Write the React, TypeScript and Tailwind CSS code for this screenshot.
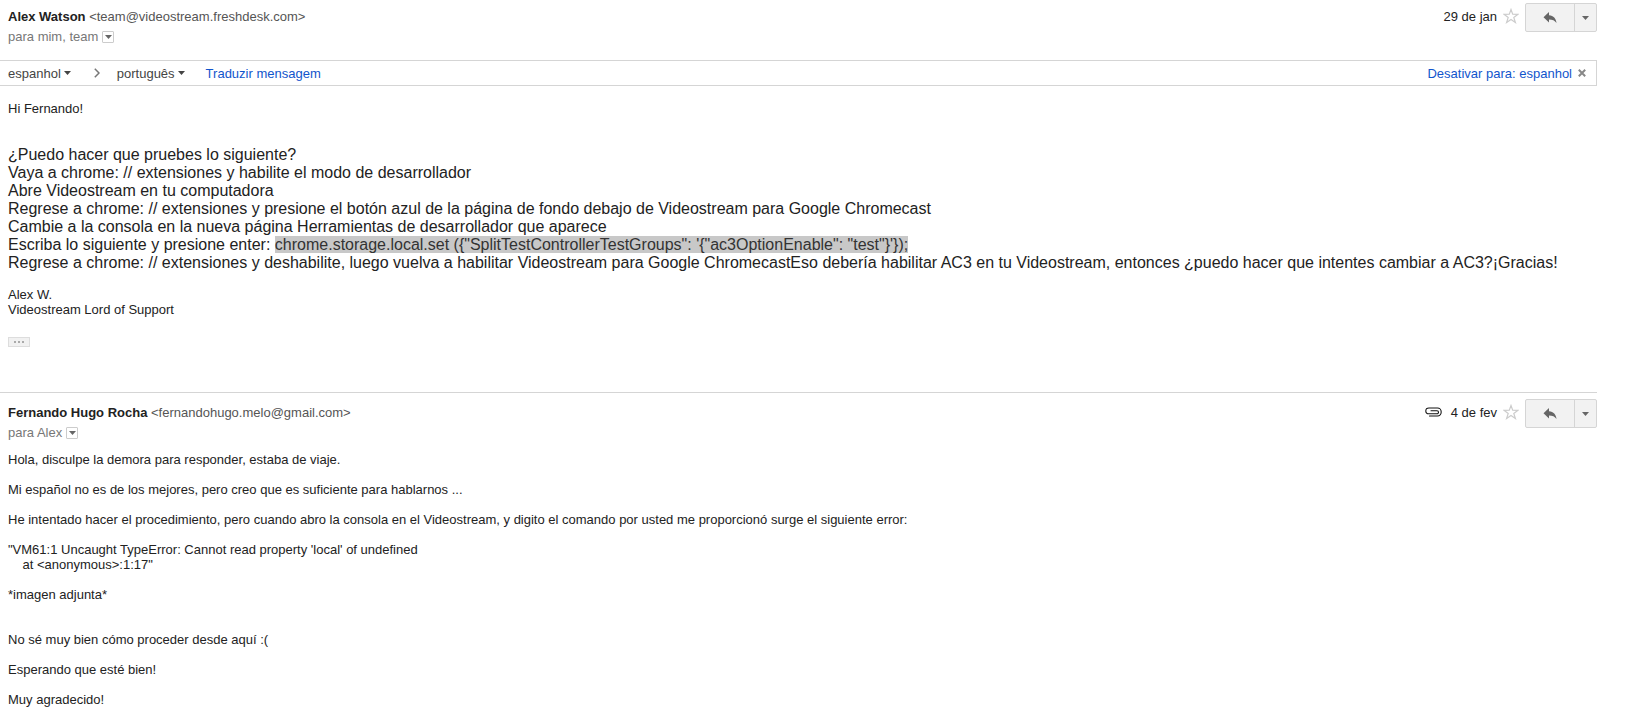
import React from 'react'

const instructions = [
  '¿Puedo hacer que pruebes lo siguiente?',
  'Vaya a chrome: // extensiones y habilite el modo de desarrollador',
  'Abre Videostream en tu computadora',
  'Regrese a chrome: // extensiones y presione el botón azul de la página de fondo debajo de Videostream para Google Chromecast',
  'Cambie a la consola en la nueva página Herramientas de desarrollador que aparece',
]

const replyText = `Hola, disculpe la demora para responder, estaba de viaje.

Mi español no es de los mejores, pero creo que es suficiente para hablarnos ...

He intentado hacer el procedimiento, pero cuando abro la consola en el Videostream, y digito el comando por usted me proporcionó surge el siguiente error:

"VM61:1 Uncaught TypeError: Cannot read property 'local' of undefined
    at <anonymous>:1:17"

*imagen adjunta*


No sé muy bien cómo proceder desde aquí :(

Esperando que esté bien!

Muy agradecido!`

function Caret({ className = '' }: { className?: string }) {
  return (
    <svg width="7" height="4" viewBox="0 0 7 4" className={className} fill="currentColor" aria-hidden="true">
      <path d="M0 0h7L3.5 4z" />
    </svg>
  )
}

function Clip() {
  return (
    <svg width="17" height="10" viewBox="0 0 17 10" fill="none" stroke="#111" strokeWidth="1.1" strokeLinecap="round" aria-hidden="true">
      <path d="M4.500 9H12.500a3.700 4 0 0 0 0-8H4a3.200 2.900 0 0 0 0 5.800h8a1.500 1.500 0 0 0 0-3H6" />
    </svg>
  )
}

type HeaderProps = {
  name: string
  email: string
  to: string
  date: string
  hasAttachment?: boolean
}

function MessageHeader({ name, email, to, date, hasAttachment }: HeaderProps) {
  return (
    <header className="flex items-start justify-between pl-2">
      <div className="pt-[9px]">
        <div className="leading-[15px] text-[#555]">
          <span className="font-bold text-[#222]">{name}</span> &lt;{email}&gt;
        </div>
        <div className="mt-[5px] flex items-center leading-[15px] text-[#777]">
          {to}
          <button aria-label="Mostrar detalhes" className="ml-1 flex h-3 w-3 items-center justify-center rounded-[1px] border border-[#ccc] text-[#666]">
            <Caret />
          </button>
        </div>
      </div>
      <div className="flex items-center">
        {hasAttachment && <Clip />}
        <span className="ml-[9px] text-[#222]">{date}</span>
        <button aria-label="Com estrela" className="mx-[6px]">
          <svg width="16" height="16" viewBox="0 0 16 16" fill="none" stroke="#ccc" strokeWidth="1.2" aria-hidden="true">
            <path d="M8 1.500l1.700 4.700 5.300.1-4.200 3.100 1.600 5.100L8 11.400l-4.400 3.100 1.600-5.100L1 6.300l5.300-.1z" />
          </svg>
        </button>
        <div className="mt-[3px] flex h-[29px] rounded-[2px] border border-[#d5d5d5] bg-[#f2f2f2] text-[#666]">
          <button aria-label="Responder" className="flex w-[49px] items-center justify-center border-r border-[#d5d5d5]">
            <svg width="14" height="12" viewBox="0 0 14 12" fill="currentColor" aria-hidden="true">
              <path d="M6 0v3.200c4.500.3 7 3.200 7.500 7.800C11.800 8.500 9.500 7.500 6 7.500V10.500L.5 5.200z" />
            </svg>
          </button>
          <button aria-label="Mais" className="flex w-[21px] items-center justify-center">
            <Caret />
          </button>
        </div>
      </div>
    </header>
  )
}

function TranslateBar() {
  return (
    <div className="mt-4 flex h-[26px] items-center justify-between border border-l-0 border-[#d5d5d5] pl-2 text-[#444]">
      <div className="flex items-center">
        <button className="flex items-center gap-[3px]">
          espanhol <Caret />
        </button>
        <svg width="6" height="10" viewBox="0 0 6 10" fill="none" stroke="#777" strokeWidth="1.5" className="mr-[17px] ml-[23px]" aria-hidden="true">
          <path d="M.8.8L5 5 .8 9.200" />
        </svg>
        <button className="flex items-center gap-[3px]">
          português <Caret />
        </button>
        <a href="#traduzir" className="ml-[21px] text-[#15c]">Traduzir mensagem</a>
      </div>
      <div className="flex items-center">
        <a href="#desativar" className="text-[#15c]">Desativar para: espanhol</a>
        <button aria-label="Fechar" className="mr-[10px] ml-[6px]">
          <svg width="8" height="8" viewBox="0 0 8 8" stroke="#888" strokeWidth="2" aria-hidden="true">
            <path d="M.8.8l6.400 6.400M7.200.8L.8 7.200" />
          </svg>
        </button>
      </div>
    </div>
  )
}

export default function App() {
  return (
    <main className="min-h-screen bg-white pr-8 font-['Liberation_Sans',Arial,sans-serif] text-[13px] leading-[15px] text-[#222]">
      <article>
        <MessageHeader name="Alex Watson" email="team@videostream.freshdesk.com" to="para mim, team" date="29 de jan" />
        <TranslateBar />
        <div className="pt-[15px] pl-2">
          <p>Hi Fernando!</p>
          <div className="mt-[30px] text-base leading-[18px]">
            {instructions.map((line) => (
              <p key={line}>{line}</p>
            ))}
            <p>
              Escriba lo siguiente y presione enter:{' '}
              <span className="bg-[#c8c8c8] text-[#333]">
                {`chrome.storage.local.set ({"SplitTestControllerTestGroups": '{"ac3OptionEnable": "test"}'});`}
              </span>
            </p>
            <p>
              Regrese a chrome: // extensiones y deshabilite, luego vuelva a habilitar Videostream para Google ChromecastEso debería habilitar AC3 en tu Videostream, entonces ¿puedo hacer que intentes cambiar a AC3?¡Gracias!
            </p>
          </div>
          <p className="mt-[15px]">Alex W.</p>
          <p>Videostream Lord of Support</p>
          <button aria-label="Mostrar conteúdo cortado" className="mt-5 flex h-[10px] w-[22px] items-center justify-center gap-[2px] border border-[#ddd] bg-[#f1f1f1]">
            <span className="h-[2px] w-[2px] bg-[#aaa]" />
            <span className="h-[2px] w-[2px] bg-[#aaa]" />
            <span className="h-[2px] w-[2px] bg-[#aaa]" />
          </button>
        </div>
      </article>
      <article className="mt-[45px] border-t border-[#d5d5d5] pt-[3px]">
        <MessageHeader
          name="Fernando Hugo Rocha"
          email="fernandohugo.melo@gmail.com"
          to="para Alex"
          date="4 de fev"
          hasAttachment
        />
        <div className="pt-3 pl-2 whitespace-pre-wrap">{replyText}</div>
      </article>
    </main>
  )
}
